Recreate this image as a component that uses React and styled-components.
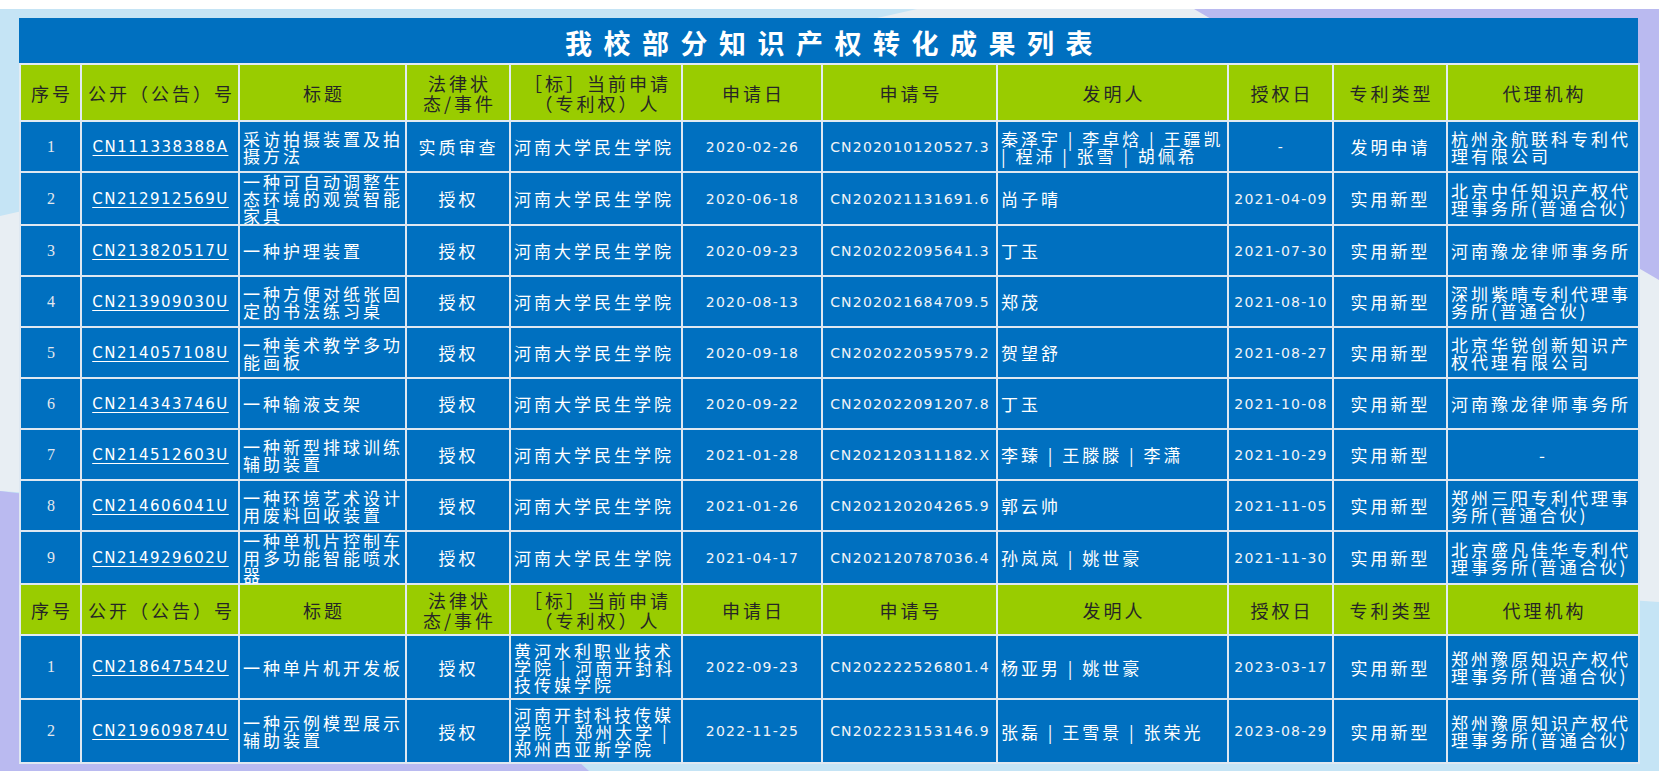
import React from "react";
import styled, { createGlobalStyle } from "styled-components";

const GlobalStyle = createGlobalStyle`
  html, body { margin: 0; padding: 0; background: #ffffff; }
  body { font-family: "Noto Sans CJK SC", "Noto Sans", sans-serif; }
`;

const CJK = `"Noto Sans CJK SC", "Noto Sans", sans-serif`;
const NUM = `"DejaVu Sans", "Noto Sans CJK SC", sans-serif`;

const Page = styled.div`
  width: 1679px;
  height: 783px;
  padding-top: 9px;
  box-sizing: border-box;
`;

const Frame = styled.div`
  position: relative;
  width: 1659px;
  height: 762px;
  box-sizing: border-box;
  padding: 9px 21px 0 19px;
`;

const Backdrop = styled.svg`
  position: absolute;
  inset: 0;
  width: 100%;
  height: 100%;
  z-index: 0;
`;

const Board = styled.div`
  position: relative;
  z-index: 1;
  width: 1619px;
  display: flex;
  flex-direction: column;
`;

const TitleBar = styled.div`
  height: 45px;
  background: #0070c0;
  color: #ffffff;
  display: flex;
  align-items: center;
  justify-content: center;
  padding: 3px 0 0 12px;
  box-sizing: border-box;
  font-family: ${CJK};
  font-weight: 700;
  font-size: 27px;
  letter-spacing: 11.5px;
`;

const Table = styled.table`
  width: 1619px;
  table-layout: fixed;
  border-collapse: collapse;
`;

const Row = styled.tr`
  height: ${(p) => p.$h}px;
`;

const HeadCell = styled.th`
  background: #99cc00;
  border: 2px solid #e2ebf3;
  color: #262626;
  font-family: ${CJK};
  font-weight: 400;
  font-size: 18px;
  line-height: 20px;
  letter-spacing: 3px;
  text-align: center;
  vertical-align: middle;
  white-space: pre;
  padding: 0 0 0 3px;
`;

const BaseCell = styled.td`
  background: #0070c0;
  border: 2px solid #dfe8f1;
  color: #ffffff;
  vertical-align: middle;
  white-space: pre;
  overflow: visible;
  padding: 0 2px 0 3px;
`;

const IndexCell = styled(BaseCell)`
  font-family: "Liberation Serif", serif;
  font-size: 16px;
  color: #e4e8ee;
  text-align: center;
`;

const CodeCell = styled(BaseCell)`
  font-family: ${NUM};
  font-size: 15px;
  letter-spacing: 1.5px;
  text-align: center;
`;

const Code = styled.span`
  text-decoration: underline;
  text-underline-offset: 3px;
  text-decoration-thickness: 1px;
`;

const NumCell = styled(BaseCell)`
  font-family: ${NUM};
  font-size: 14px;
  letter-spacing: 1.2px;
  color: #f2f4f7;
  text-align: center;
`;

const TextCell = styled(BaseCell)`
  font-family: ${CJK};
  font-size: 17px;
  line-height: 17px;
  letter-spacing: 3px;
  text-align: ${(p) => p.$align || "left"};
`;

const widths = [61, 158, 167, 104, 172, 140, 175, 231, 105, 114, 192];

const headers = [
  "序号",
  "公开（公告）号",
  "标题",
  "法律状\n态/事件",
  "［标］当前申请\n（专利权）人",
  "申请日",
  "申请号",
  "发明人",
  "授权日",
  "专利类型",
  "代理机构",
];

const SCHOOL = "河南大学民生学院";

const groupA = [
  ["1", "CN111338388A", "采访拍摄装置及拍\n摄方法", "实质审查", SCHOOL, "2020-02-26", "CN202010120527.3", "秦泽宇 | 李卓焓 | 王疆凯\n| 程沛 | 张雪 | 胡佩希", "-", "发明申请", "杭州永航联科专利代\n理有限公司"],
  ["2", "CN212912569U", "一种可自动调整生\n态环境的观赏智能\n家具", "授权", SCHOOL, "2020-06-18", "CN202021131691.6", "尚子晴", "2021-04-09", "实用新型", "北京中仟知识产权代\n理事务所(普通合伙)"],
  ["3", "CN213820517U", "一种护理装置", "授权", SCHOOL, "2020-09-23", "CN202022095641.3", "丁玉", "2021-07-30", "实用新型", "河南豫龙律师事务所"],
  ["4", "CN213909030U", "一种方便对纸张固\n定的书法练习桌", "授权", SCHOOL, "2020-08-13", "CN202021684709.5", "郑茂", "2021-08-10", "实用新型", "深圳紫晴专利代理事\n务所(普通合伙)"],
  ["5", "CN214057108U", "一种美术教学多功\n能画板", "授权", SCHOOL, "2020-09-18", "CN202022059579.2", "贺望舒", "2021-08-27", "实用新型", "北京华锐创新知识产\n权代理有限公司"],
  ["6", "CN214343746U", "一种输液支架", "授权", SCHOOL, "2020-09-22", "CN202022091207.8", "丁玉", "2021-10-08", "实用新型", "河南豫龙律师事务所"],
  ["7", "CN214512603U", "一种新型排球训练\n辅助装置", "授权", SCHOOL, "2021-01-28", "CN202120311182.X", "李臻 | 王滕滕 | 李潇", "2021-10-29", "实用新型", "-"],
  ["8", "CN214606041U", "一种环境艺术设计\n用废料回收装置", "授权", SCHOOL, "2021-01-26", "CN202120204265.9", "郭云帅", "2021-11-05", "实用新型", "郑州三阳专利代理事\n务所(普通合伙)"],
  ["9", "CN214929602U", "一种单机片控制车\n用多功能智能喷水\n器", "授权", SCHOOL, "2021-04-17", "CN202120787036.4", "孙岚岚 | 姚世豪", "2021-11-30", "实用新型", "北京盛凡佳华专利代\n理事务所(普通合伙)"],
];

const groupB = [
  ["1", "CN218647542U", "一种单片机开发板", "授权", "黄河水利职业技术\n学院 | 河南开封科\n技传媒学院", "2022-09-23", "CN202222526801.4", "杨亚男 | 姚世豪", "2023-03-17", "实用新型", "郑州豫原知识产权代\n理事务所(普通合伙)"],
  ["2", "CN219609874U", "一种示例模型展示\n辅助装置", "授权", "河南开封科技传媒\n学院 | 郑州大学 |\n郑州西亚斯学院", "2022-11-25", "CN202223153146.9", "张磊 | 王雪景 | 张荣光", "2023-08-29", "实用新型", "郑州豫原知识产权代\n理事务所(普通合伙)"],
];

function HeaderRow({ h }) {
  return (
    <Row $h={h}>
      {headers.map((t, i) => (
        <HeadCell key={i}>{t}</HeadCell>
      ))}
    </Row>
  );
}

function DataRow({ r, h }) {
  const [idx, code, title, status, owner, date, appNo, inventors, grant, type, agency] = r;
  return (
    <Row $h={h}>
      <IndexCell>{idx}</IndexCell>
      <CodeCell>
        <Code>{code}</Code>
      </CodeCell>
      <TextCell>{title}</TextCell>
      <TextCell $align="center">{status}</TextCell>
      <TextCell>{owner}</TextCell>
      <NumCell>{date}</NumCell>
      <NumCell>{appNo}</NumCell>
      <TextCell>{inventors}</TextCell>
      <NumCell>{grant}</NumCell>
      <TextCell $align="center">{type}</TextCell>
      <TextCell $align={agency === "-" ? "center" : "left"}>{agency}</TextCell>
    </Row>
  );
}

export default function App() {
  return (
    <>
      <GlobalStyle />
      <Page>
        <Frame>
          <Backdrop viewBox="0 0 1659 762" preserveAspectRatio="none" aria-hidden="true">
            <rect width="1659" height="762" fill="#c5e4f5" />
            <polygon points="917,0 1659,0 1659,593 0,482 0,207" fill="#e8eef3" />
            <polygon points="1194,0 1659,0 1659,271" fill="#babaf0" />
            <polygon points="0,482 320,520 589,762 0,762" fill="#babaf0" />
          </Backdrop>
          <Board>
            <TitleBar>我校部分知识产权转化成果列表</TitleBar>
            <Table>
              <colgroup>
                {widths.map((w, i) => (
                  <col key={i} style={{ width: w }} />
                ))}
              </colgroup>
              <tbody>
                <HeaderRow h={57} />
                {groupA.map((r) => (
                  <DataRow key={"a" + r[1]} r={r} h={51} />
                ))}
                <HeaderRow h={51} />
                {groupB.map((r) => (
                  <DataRow key={"b" + r[1]} r={r} h={64} />
                ))}
              </tbody>
            </Table>
          </Board>
        </Frame>
      </Page>
    </>
  );
}
